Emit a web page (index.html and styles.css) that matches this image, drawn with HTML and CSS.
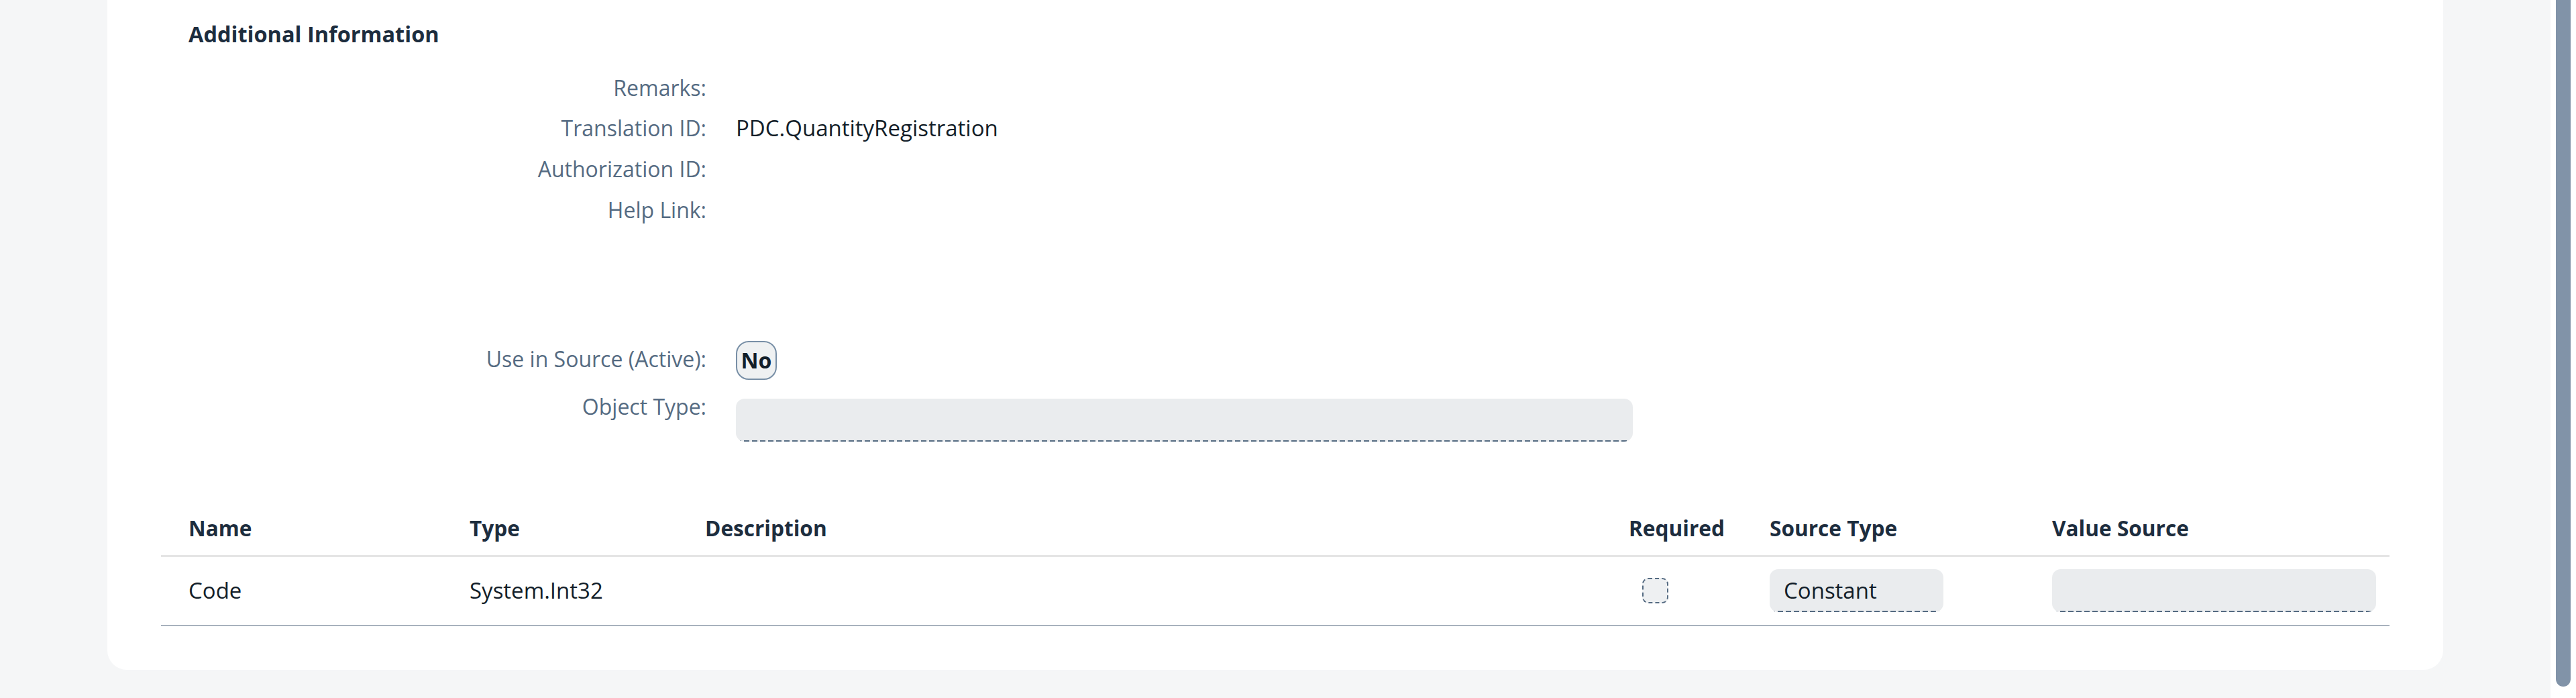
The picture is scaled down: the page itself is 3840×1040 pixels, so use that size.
FILE: index.html
```html
<!DOCTYPE html>
<html lang="en">
<head>
<meta charset="utf-8">
<title>Additional Information</title>
<link rel="stylesheet" href="styles.css">
</head>
<body>
<div class="app">
  <main class="page">
    <section class="card">
      <h2 class="title">Additional Information</h2>
      <div class="form form-top">
        <div class="label">Remarks:</div><div class="value"></div>
        <div class="label">Translation ID:</div><div class="value">PDC.QuantityRegistration</div>
        <div class="label">Authorization ID:</div><div class="value"></div>
        <div class="label">Help Link:</div><div class="value"></div>
      </div>
      <div class="form form-bottom">
        <div class="label label-toggle">Use in Source (Active):</div>
        <div class="value"><span class="pill">No</span></div>
        <div class="label label-input">Object Type:</div>
        <div class="value"><div class="field field-wide"></div></div>
      </div>
      <div class="table">
        <div class="tr thead">
          <div class="th">Name</div>
          <div class="th">Type</div>
          <div class="th">Description</div>
          <div class="th">Required</div>
          <div class="th">Source Type</div>
          <div class="th">Value Source</div>
        </div>
        <div class="tr trow">
          <div class="td">Code</div>
          <div class="td">System.Int32</div>
          <div class="td"></div>
          <div class="td"><div class="checkbox"></div></div>
          <div class="td"><div class="field field-source">Constant</div></div>
          <div class="td"><div class="field field-value"></div></div>
        </div>
      </div>
    </section>
  </main>
  <div class="scrollbar"><div class="thumb"></div></div>
</div>
</body>
</html>
```

FILE: styles.css
```css
html, body {
  margin: 0;
  height: 1040px;
  overflow: hidden;
}

body {
  font-family: "Open Sans", "Noto Sans", sans-serif;
  font-size: 32px;
  background: #f5f6f7;
  color: #131e29;
}

.app {
  display: flex;
  height: 1040px;
}

.page {
  flex: 1;
  padding: 0 160px;
}

.card {
  background: #ffffff;
  border-radius: 0 0 29px 29px;
  padding: 29px 80px 65px;
}

.title {
  margin: 0 0 0 41px;
  font-size: 32.5px;
  font-weight: 700;
  line-height: 44px;
  color: #1d2d3e;
}

.form {
  display: grid;
  grid-template-columns: 813px 1fr;
  column-gap: 44px;
}

.form-top {
  margin-top: 35.6px;
  row-gap: 16.67px;
  grid-auto-rows: 44px;
}

.form-bottom {
  margin-top: 173.4px;
  row-gap: 28px;
  align-items: start;
}

.label {
  text-align: right;
  color: #556b82;
  font-size: 32px;
  line-height: 44px;
  white-space: nowrap;
}

.label-toggle {
  margin-top: 4.6px;
}

.label-input {
  margin-top: -10.4px;
}

.value {
  font-size: 33px;
  line-height: 44px;
  color: #131e29;
}

.pill {
  display: inline-flex;
  align-items: center;
  justify-content: center;
  width: 61px;
  height: 58px;
  box-sizing: border-box;
  border: 2px solid #788fa6;
  border-radius: 19px;
  background: #eff1f2;
  font-size: 32px;
  font-weight: 700;
  color: #131e29;
  vertical-align: top;
}

.field {
  box-sizing: border-box;
  height: 64px;
  border-radius: 13px;
  background:
    repeating-linear-gradient(90deg, #556b82 0 8px, transparent 8px 12px) left bottom / 100% 2px no-repeat,
    #eaecee;
  display: flex;
  align-items: center;
  line-height: 44px;
  color: #131e29;
}

.field-wide {
  width: 1337px;
}

.field-source {
  width: 259px;
  padding-left: 21px;
}

.field-value {
  width: 483px;
}

.table {
  margin-top: 106.6px;
}

.tr {
  display: grid;
  grid-template-columns: 419px 351px 1377px 210px 421px 1fr;
}

.thead {
  padding-bottom: 18.4px;
  border-bottom: 3px solid #e5e5e5;
}

.th {
  padding-left: 41px;
  font-size: 31.6px;
  font-weight: 700;
  line-height: 44px;
  color: #1d2d3e;
  white-space: nowrap;
}

.trow {
  height: 101px;
  align-items: center;
  border-bottom: 2px solid #a8b2bd;
}

.td {
  padding-left: 41px;
  font-size: 33px;
  line-height: 44px;
  white-space: nowrap;
}

.checkbox {
  width: 39px;
  height: 38px;
  box-sizing: border-box;
  margin-left: 20px;
  border: 2px dashed #556b82;
  border-radius: 9px;
  background: #eef0f2;
}

.scrollbar {
  width: 38px;
  background: #ffffff;
  flex: none;
}

.thumb {
  margin-left: 8px;
  width: 22px;
  height: 1023px;
  background: #8193a8;
  border-radius: 0 0 11px 11px;
}
```
